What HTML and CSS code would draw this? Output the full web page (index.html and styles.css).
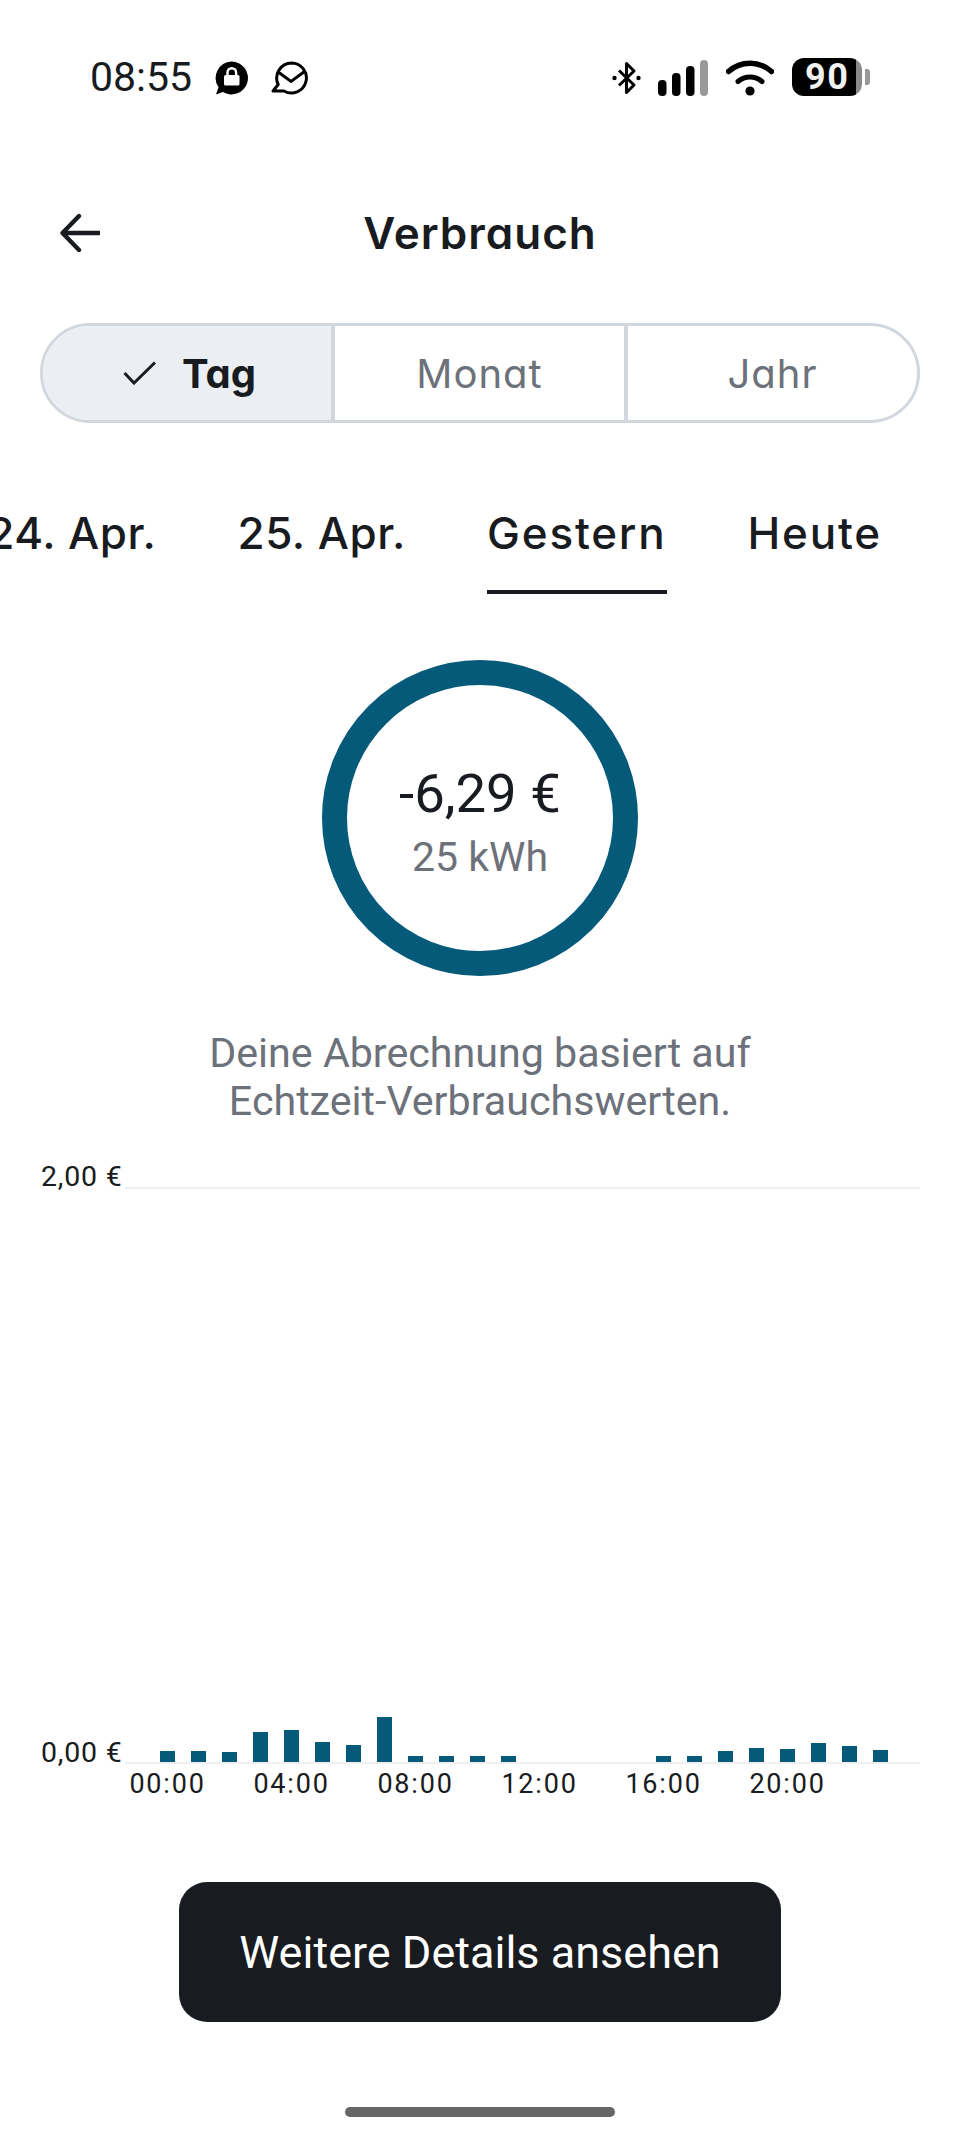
FILE: index.html
```html
<!DOCTYPE html>
<html lang="de">
<head>
    <meta charset="UTF-8">
    <meta name="viewport" content="width=device-width, initial-scale=1.0">
    <title>Verbrauch</title>
    <link rel="stylesheet" href="styles.css">
</head>
<body>
    <div class="status-bar">
        <div class="status-left">
            <span class="clock">08:55</span>
            <svg class="icon-lock" width="34" height="34" viewBox="0 0 34 34">
                <path d="M17.5 0.5a16.5 16.5 0 1 1-8.6 30.6L2 33.5l2.6-7.2A16.5 16.5 0 0 1 17.5 0.5z" fill="#000"/>
                <rect x="10" y="14" width="15.5" height="10.5" rx="1.5" fill="#fff"/>
                <path d="M13.5 14.5v-3a4.3 4.3 0 0 1 8.6 0v3" fill="none" stroke="#fff" stroke-width="2.4"/>
            </svg>
            <svg class="icon-mail" width="37" height="34" viewBox="0 0 37 34">
                <path d="M20.5 2a15 15 0 1 1-7.6 28H2l5.2-6.5A15 15 0 0 1 20.5 2z" fill="none" stroke="#000" stroke-width="3" stroke-linejoin="round"/>
                <path d="M6.5 10.5L20 20.5l13.5-10" fill="none" stroke="#000" stroke-width="3"/>
            </svg>
        </div>
        <div class="status-right">
            <svg class="icon-bt" width="29" height="34" viewBox="0 0 29 34">
                <path d="M7 9.5l15 14.5-7.5 7.5V2.5l7.5 7.5L7 24.5" fill="none" stroke="#000" stroke-width="3" stroke-linejoin="round"/>
                <circle cx="2.5" cy="17" r="2.2" fill="#000"/>
                <circle cx="26.5" cy="17" r="2.2" fill="#000"/>
            </svg>
            <svg class="icon-signal" width="50" height="36" viewBox="0 0 50 36">
                <rect x="0" y="20" width="8.5" height="16" rx="4" fill="#000"/>
                <rect x="14" y="13" width="8.5" height="23" rx="4" fill="#000"/>
                <rect x="28" y="6" width="8.5" height="30" rx="4" fill="#000"/>
                <rect x="42" y="0" width="8" height="36" rx="4" fill="#999"/>
            </svg>
            <svg class="icon-wifi" width="48" height="36" viewBox="0 0 48 36">
                <path d="M2.5 11.5C15 0.5 33 0.5 45.5 11.5" fill="none" stroke="#000" stroke-width="5.5" stroke-linecap="round"/>
                <path d="M12 21.5c7-6 17-6 24 0" fill="none" stroke="#000" stroke-width="5" stroke-linecap="round"/>
                <circle cx="24" cy="31" r="4.6" fill="#000"/>
            </svg>
            <div class="battery">
                <div class="battery-body"><span>90</span></div>
                <div class="battery-nub"></div>
            </div>
        </div>
    </div>

    <header class="top-bar">
        <svg class="back-arrow" width="40" height="40" viewBox="0 0 40 40">
            <path d="M39 20H3M19 3L2.5 20 19 37" fill="none" stroke="#181b20" stroke-width="4.4" stroke-linejoin="round" stroke-linecap="round"/>
        </svg>
        <h1>Verbrauch</h1>
    </header>

    <div class="segments">
        <div class="segment selected">
            <svg width="33" height="24" viewBox="0 0 33 24">
                <path d="M1.5 12l9.5 10L32 1.5" fill="none" stroke="#181b20" stroke-width="3"/>
            </svg>
            <span>Tag</span>
        </div>
        <div class="segment"><span>Monat</span></div>
        <div class="segment"><span>Jahr</span></div>
    </div>

    <nav class="day-tabs">
        <div class="day-tab date">24. Apr.</div>
        <div class="day-tab date">25. Apr.</div>
        <div class="day-tab active">Gestern</div>
        <div class="day-tab">Heute</div>
    </nav>

    <div class="ring">
        <div class="ring-price">-6,29 €</div>
        <div class="ring-kwh">25 kWh</div>
    </div>

    <p class="note">Deine Abrechnung basiert auf<br>Echtzeit-Verbrauchswerten.</p>

    <section class="chart">
        <div class="chart-main">
            <div class="y-axis">
                <span>2,00 €</span>
                <span>0,00 €</span>
            </div>
            <div class="plot">
                <div class="bar" style="height:11px"></div>
                <div class="bar" style="height:11px"></div>
                <div class="bar" style="height:10.5px"></div>
                <div class="bar" style="height:30.5px"></div>
                <div class="bar" style="height:32.5px"></div>
                <div class="bar" style="height:20px"></div>
                <div class="bar" style="height:17.5px"></div>
                <div class="bar" style="height:45.5px"></div>
                <div class="bar" style="height:6px"></div>
                <div class="bar" style="height:6px"></div>
                <div class="bar" style="height:6px"></div>
                <div class="bar" style="height:6px"></div>
                <div class="bar" style="height:0"></div>
                <div class="bar" style="height:0"></div>
                <div class="bar" style="height:0"></div>
                <div class="bar" style="height:0"></div>
                <div class="bar" style="height:6px"></div>
                <div class="bar" style="height:6px"></div>
                <div class="bar" style="height:11px"></div>
                <div class="bar" style="height:14px"></div>
                <div class="bar" style="height:13px"></div>
                <div class="bar" style="height:19px"></div>
                <div class="bar" style="height:16px"></div>
                <div class="bar" style="height:12.5px"></div>
            </div>
        </div>
        <div class="x-axis">
            <span>00:00</span>
            <span>04:00</span>
            <span>08:00</span>
            <span>12:00</span>
            <span>16:00</span>
            <span>20:00</span>
        </div>
    </section>

    <div class="actions">
        <button class="details-button">Weitere Details ansehen</button>
    </div>

    <div class="home-bar"></div>
</body>
</html>
```

FILE: styles.css
```css
:root {
    --ink: #181b20;
    --muted: #6c717a;
    --teal: #055a7a;
    --line: #d2d7de;
}

* {
    margin: 0;
    padding: 0;
    box-sizing: border-box;
}

html, body {
    width: 960px;
    height: 2142px;
    overflow: hidden;
}

body {
    background: #ffffff;
    color: var(--ink);
    font-family: Roboto, sans-serif;
}

/* status bar */
.status-bar {
    height: 110px;
    padding: 56px 90px 0 90px;
    display: flex;
    justify-content: space-between;
    align-items: flex-start;
}

.status-left {
    display: flex;
    align-items: center;
    height: 40px;
}

.clock {
    font-size: 41px;
    line-height: 40px;
    width: 124px;
    padding-top: 2px;
}

.icon-lock {
    margin-right: 23px;
    margin-top: 4px;
}

.icon-mail {
    margin-top: 4px;
}

.status-right {
    display: flex;
    align-items: center;
    height: 40px;
}

.icon-bt {
    margin-right: 17px;
    margin-top: 3px;
}

.icon-signal {
    margin-right: 18px;
    margin-top: 3px;
}

.icon-wifi {
    margin-right: 18px;
    margin-top: 3px;
}

.battery {
    display: flex;
    align-items: center;
    margin-top: 2px;
}

.battery-body {
    width: 70px;
    height: 38px;
    border-radius: 12px;
    background: linear-gradient(to right, #000 64px, #8a8a8a 64px);
    color: #f2f2f2;
    font-size: 36px;
    font-weight: 700;
    line-height: 38px;
    letter-spacing: 1.5px;
    padding-left: 13px;
}

.battery-nub {
    width: 5px;
    height: 16px;
    margin-left: 3px;
    background: #999;
    border-radius: 0 3px 3px 0;
}

/* header */
.top-bar {
    height: 100px;
    margin-top: 73px;
    padding-left: 60px;
    position: relative;
    display: flex;
    align-items: center;
    justify-content: center;
}

.back-arrow {
    position: absolute;
    left: 60px;
    top: 30px;
}

.top-bar h1 {
    font-family: Inter, sans-serif;
    font-feature-settings: "cv11" 1;
    font-size: 44px;
    font-weight: 600;
    letter-spacing: 1px;
    padding-right: 60px;
}

/* Tag / Monat / Jahr */
.segments {
    margin: 40px 40px 0 40px;
    height: 100px;
    display: grid;
    grid-template-columns: 288px 293px 1fr;
    border: 3px solid var(--line);
    border-radius: 50px;
    overflow: hidden;
}

.segment {
    display: flex;
    align-items: center;
    justify-content: center;
    gap: 26px;
    font-family: Inter, sans-serif;
    font-feature-settings: "cv11" 1;
    font-size: 40px;
    letter-spacing: 1px;
    color: var(--muted);
    border-left: 4px solid var(--line);
}

.segment:first-child {
    border-left: none;
}

.segment.selected {
    background: #ebeff3;
    color: var(--ink);
    font-weight: 700;
    letter-spacing: 0;
    padding-left: 5px;
}

/* day tabs */
.day-tabs {
    margin-top: 49px;
    height: 122px;
    padding-right: 78px;
    display: flex;
    justify-content: flex-end;
    gap: 81px;
    overflow: hidden;
}

.day-tab {
    flex: none;
    font-family: Inter, sans-serif;
    font-size: 44px;
    font-weight: 500;
    letter-spacing: 1.8px;
    line-height: 122px;
    height: 122px;
}

.day-tab.date {
    letter-spacing: 0.6px;
}

.day-tab.active {
    border-bottom: 4px solid var(--ink);
}

/* ring */
.ring {
    width: 316px;
    height: 316px;
    margin: 66px auto 0;
    border: 25px solid var(--teal);
    border-radius: 50%;
    display: flex;
    flex-direction: column;
    align-items: center;
    padding-top: 78px;
}

.ring-price {
    font-size: 54.5px;
    line-height: 60px;
}

.ring-kwh {
    font-size: 41px;
    line-height: 50px;
    margin-top: 9px;
    color: var(--muted);
}

.note {
    margin-top: 53px;
    text-align: center;
    font-size: 41.2px;
    line-height: 48px;
    color: var(--muted);
}

/* chart */
.chart {
    margin-top: 62px;
    padding: 0 40px 0 41px;
}

.chart-main {
    display: flex;
}

.y-axis {
    width: 84px;
    height: 608px;
    margin-top: -26px;
    margin-bottom: -5px;
    display: flex;
    flex-direction: column;
    justify-content: space-between;
    font-size: 28.5px;
    letter-spacing: 0.8px;
    line-height: 32px;
    white-space: nowrap;
}

.plot {
    flex: 1;
    height: 577px;
    border-top: 2px solid #f0f0f2;
    border-bottom: 2px solid #f0f0f2;
    padding-left: 35px;
    display: flex;
    align-items: flex-end;
    gap: 16px;
}

.bar {
    width: 15px;
    background: var(--teal);
}

.x-axis {
    display: flex;
    margin-left: 64.5px;
    margin-top: 4px;
}

.x-axis span {
    width: 124px;
    text-align: center;
    font-size: 27px;
    line-height: 32px;
    letter-spacing: 1.8px;
}

/* button */
.actions {
    margin-top: 82px;
    display: flex;
    justify-content: center;
}

.details-button {
    width: 602px;
    height: 140px;
    border: none;
    border-radius: 28px;
    background: var(--ink);
    color: #ffffff;
    font-family: Roboto, sans-serif;
    font-size: 45px;
}

.home-bar {
    width: 270px;
    height: 10px;
    margin: 85px auto 0;
    border-radius: 5px;
    background: #666666;
}
```
